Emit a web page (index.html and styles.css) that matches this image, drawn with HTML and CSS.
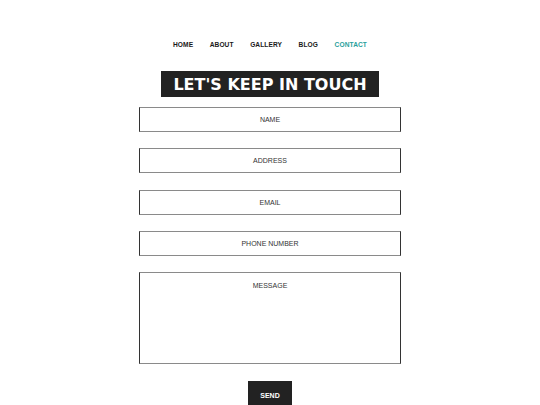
FILE: index.html
```html
<!DOCTYPE html>
<html>
<head>
<meta charset="utf-8">
<link rel="stylesheet" href="styles.css">
</head>
<body>
<nav class="nav">
  <a class="nav-link">HOME</a>
  <a class="nav-link">ABOUT</a>
  <a class="nav-link">GALLERY</a>
  <a class="nav-link">BLOG</a>
  <a class="nav-link active">CONTACT</a>
</nav>
<div class="title-wrap">
  <h1 class="title">LET'S KEEP IN TOUCH</h1>
</div>
<form class="form">
  <input class="field" type="text" placeholder="NAME">
  <input class="field" type="text" placeholder="ADDRESS">
  <input class="field" type="text" placeholder="EMAIL">
  <input class="field" type="text" placeholder="PHONE NUMBER">
  <textarea class="field message" placeholder="MESSAGE"></textarea>
  <button class="send" type="button">SEND</button>
</form>
</body>
</html>
```
FILE: styles.css
```css
html, body {
  margin: 0;
  padding: 0;
  background: #fff;
  font-family: "Liberation Sans", Arial, sans-serif;
}
.nav {
  display: flex;
  justify-content: center;
  gap: 16.5px;
  padding-top: 39px;
  height: 12px;
  line-height: 12px;
}
.nav-link {
  font-size: 6.6px;
  font-weight: bold;
  color: #1a1a1a;
  letter-spacing: 0.1px;
}
.nav-link.active {
  color: #2a9f9c;
}
.title-wrap {
  display: flex;
  justify-content: center;
  margin-top: 20px;
}
.title {
  margin: 0;
  background: #222;
  color: #fff;
  height: 26px;
  line-height: 27px;
  padding: 0 12px;
  font-family: "DejaVu Sans", sans-serif;
  font-weight: bold;
  font-size: 16px;
  letter-spacing: 0;
}
.form {
  width: 262px;
  margin: 10px auto 0;
  display: flex;
  flex-direction: column;
  align-items: center;
}
.field {
  box-sizing: border-box;
  width: 262px;
  height: 25px;
  margin: 0 0 16.25px;
  padding: 0;
  border-style: solid;
  border-width: 1px;
  border-color: #8a8a8a #333 #8a8a8a #333;
  background: #fff;
  font-family: "Liberation Sans", Arial, sans-serif;
  font-size: 7px;
  text-align: center;
  color: #333;
  outline: none;
}
.field::placeholder {
  color: #333;
  opacity: 1;
}
.message {
  height: 92px;
  resize: none;
  padding-top: 8px;
  line-height: 10px;
  margin-bottom: 17px;
}
.send {
  width: 44px;
  height: 28px;
  border: none;
  background: #222;
  color: #fff;
  font-family: "Liberation Sans", Arial, sans-serif;
  font-weight: bold;
  font-size: 7px;
  padding: 0;
}
```
